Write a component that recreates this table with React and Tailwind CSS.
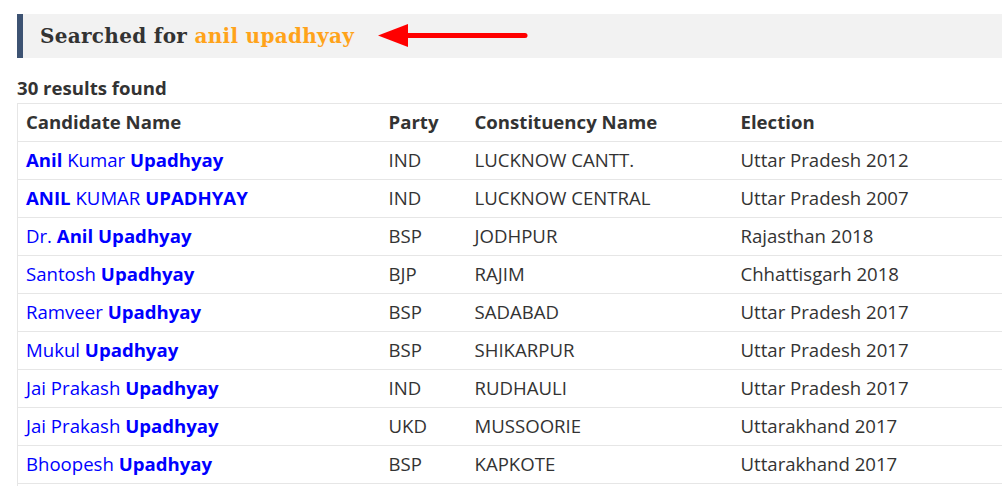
import React from 'react'

const rows = [
  { name: [['Anil', true], [' Kumar ', false], ['Upadhyay', true]], party: 'IND', seat: 'LUCKNOW CANTT.', election: 'Uttar Pradesh 2012' },
  { name: [['ANIL', true], [' KUMAR ', false], ['UPADHYAY', true]], party: 'IND', seat: 'LUCKNOW CENTRAL', election: 'Uttar Pradesh 2007' },
  { name: [['Dr. ', false], ['Anil', true], [' ', false], ['Upadhyay', true]], party: 'BSP', seat: 'JODHPUR', election: 'Rajasthan 2018' },
  { name: [['Santosh ', false], ['Upadhyay', true]], party: 'BJP', seat: 'RAJIM', election: 'Chhattisgarh 2018' },
  { name: [['Ramveer ', false], ['Upadhyay', true]], party: 'BSP', seat: 'SADABAD', election: 'Uttar Pradesh 2017' },
  { name: [['Mukul ', false], ['Upadhyay', true]], party: 'BSP', seat: 'SHIKARPUR', election: 'Uttar Pradesh 2017' },
  { name: [['Jai Prakash ', false], ['Upadhyay', true]], party: 'IND', seat: 'RUDHAULI', election: 'Uttar Pradesh 2017' },
  { name: [['Jai Prakash ', false], ['Upadhyay', true]], party: 'UKD', seat: 'MUSSOORIE', election: 'Uttarakhand 2017' },
  { name: [['Bhoopesh ', false], ['Upadhyay', true]], party: 'BSP', seat: 'KAPKOTE', election: 'Uttarakhand 2017' },
]

const App = () => {
  return (
    <div className="w-[1002px] h-[486px] overflow-hidden bg-white text-[#333] font-['Open_Sans',sans-serif]">
      <div className="pt-[14px] pl-[17px]">
        {/* search banner */}
        <div className="flex items-center h-[44px] bg-[#f2f2f2] border-l-[6px] border-[#3d5373] pl-[17px]">
          <h2 className="font-['DejaVu_Serif',serif] font-bold text-[20px] text-[#333] tracking-[0.3px]">
            Searched for <span className="text-[#ffa31a]">anil upadhyay</span>
          </h2>
          <svg width="152" height="26" viewBox="0 0 152 26" className="ml-[24px] -mt-[1px]">
            <polygon points="0,12.5 30,1 30,24" fill="#ff0000" />
            <line x1="28" y1="12.5" x2="147" y2="12.5" stroke="#ff0000" strokeWidth="5" strokeLinecap="round" />
          </svg>
        </div>

        <div className="mt-[18px] text-[18.6px] font-bold leading-[24px] text-[#333]">30 results found</div>

        <table className="mt-[3px] w-[1010px] border-collapse table-fixed text-[18.6px] leading-[24px]">
          <colgroup>
            <col className="w-[363px]" />
            <col className="w-[86px]" />
            <col className="w-[266px]" />
            <col />
          </colgroup>
          <thead>
            <tr className="h-[38px] border border-[#e6e6e6]">
              <th className="text-left font-bold px-[8px] pb-[2px]">Candidate Name</th>
              <th className="text-left font-bold px-[8px] pb-[2px]">Party</th>
              <th className="text-left font-bold px-[8px] pb-[2px]">Constituency Name</th>
              <th className="text-left font-bold px-[8px] pb-[2px]">Election</th>
            </tr>
          </thead>
          <tbody>
            {rows.map((r, i) => (
              <tr key={i} className="h-[38px] border border-[#e6e6e6]">
                <td className="px-[8px] pb-[2px] text-[#0000ff] whitespace-nowrap">
                  {r.name.map(([t, b], j) => (
                    <span key={j} className={b ? 'font-bold' : ''}>{t}</span>
                  ))}
                </td>
                <td className="px-[8px] pb-[2px]">{r.party}</td>
                <td className="px-[8px] pb-[2px]">{r.seat}</td>
                <td className="px-[8px] pb-[2px]">{r.election}</td>
              </tr>
            ))}
            <tr className="h-[38px] border border-[#e6e6e6]">
              <td colSpan={4}></td>
            </tr>
          </tbody>
        </table>
      </div>
    </div>
  )
}

export default App
